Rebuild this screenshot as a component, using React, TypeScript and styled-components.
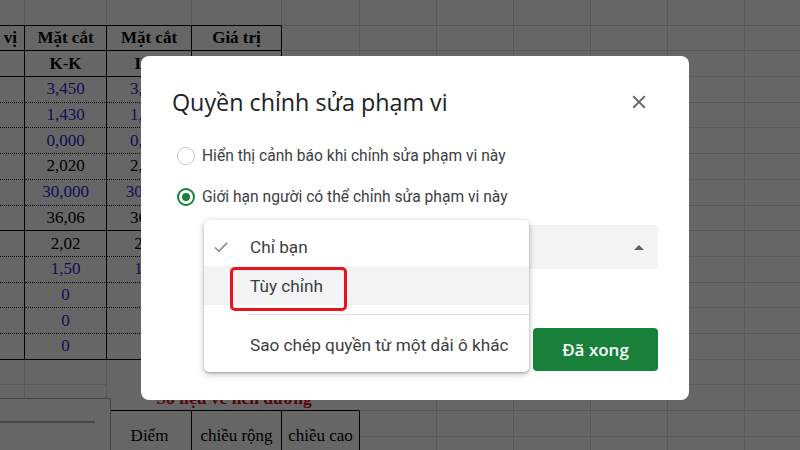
import React from 'react';
import styled, { createGlobalStyle, css } from 'styled-components';

const Global = createGlobalStyle`
  html, body { margin: 0; padding: 0; width: 800px; height: 450px; overflow: hidden; background: #fff; }
  #root { width: 800px; height: 450px; }
  * { box-sizing: border-box; }
`;

const Page = styled.div`
  position: relative;
  width: 800px;
  height: 450px;
  overflow: hidden;
  background: #fff;
`;

/* ---------- spreadsheet background ---------- */

const Sheet = styled.div`
  display: grid;
  grid-template-columns: 75px 82px 85px 90px 78px repeat(8, 77px);
  grid-auto-rows: 25.7px;
  margin-left: -50px;
  font-family: "Liberation Serif", "Times New Roman", serif;
  font-size: 17px;
  color: #000;
`;

type Edge = 'grid' | 'solid' | 'dotted' | 'none';

const edge = (e: Edge) =>
  e === 'solid' ? '1px solid #000' : e === 'dotted' ? '1px dotted #000' : e === 'none' ? '1px solid transparent' : '1px solid #dcdcdc';

const Cell = styled.div<{ $right: Edge; $bottom: Edge; $left?: Edge; $bold?: boolean; $tone?: 'blue' | 'black' | 'red'; $align?: 'center' | 'right' }>`
  display: flex;
  align-items: center;
  justify-content: ${(p) => (p.$align === 'right' ? 'flex-end' : 'center')};
  padding: 0 ${(p) => (p.$align === 'right' ? '7px' : '0')} 0 0;
  overflow: hidden;
  white-space: nowrap;
  border-right: ${(p) => edge(p.$right)};
  border-bottom: ${(p) => edge(p.$bottom)};
  ${(p) => p.$left && css`border-left: ${edge(p.$left)};`}
  font-weight: ${(p) => (p.$bold ? 700 : 400)};
  color: ${(p) => (p.$tone === 'blue' ? '#2b2bd8' : p.$tone === 'red' ? '#d01010' : '#000')};
`;

const SpanTitle = styled(Cell)`
  font-size: 17.5px;
  align-items: flex-end;
  padding-bottom: 1px;
  padding-left: 2px;
`;

const FloatBox = styled.div`
  position: absolute;
  left: 0;
  top: 398px;
  width: 111px;
  height: 60px;
  background: #fff;
  border: 1px solid #aaa;
  border-left: none;
`;

const FloatRule = styled.div`
  margin-top: 22px;
  width: 95px;
  height: 2px;
  background: #b0b0b0;
`;

const Backdrop = styled.div`
  position: absolute;
  inset: 0;
  background: rgba(0, 0, 0, 0.6);
`;

/* ---------- dialog ---------- */

const Dialog = styled.div`
  position: absolute;
  left: 141px;
  top: 56px;
  width: 548px;
  height: 344px;
  background: #fff;
  border-radius: 8px;
  padding: 24px 31px 29px 31px;
  display: flex;
  flex-direction: column;
  font-family: Roboto, "Noto Sans", sans-serif;
  color: #3c4043;
`;

const Header = styled.div`
  height: 44px;
  display: flex;
  align-items: center;
  justify-content: space-between;
`;

const Title = styled.h1`
  margin: 0;
  font-family: "Open Sans", Roboto, sans-serif;
  font-weight: 400;
  font-size: 23.3px;
  color: #202124;
`;

const CloseButton = styled.div`
  width: 36px;
  height: 36px;
  display: flex;
  align-items: center;
  justify-content: center;
  margin-right: 1px;
`;

const RadioList = styled.div`
  margin-top: 11px;
  display: flex;
  flex-direction: column;
`;

const RadioRow = styled.div`
  height: 41px;
  display: flex;
  align-items: center;
  gap: 7px;
  padding-left: 5px;
  font-size: 15.6px;
  color: #3c4043;
`;

const RadioCircle = styled.span<{ $checked?: boolean }>`
  width: 18px;
  height: 18px;
  border-radius: 50%;
  display: flex;
  align-items: center;
  justify-content: center;
  border: ${(p) => (p.$checked ? '2px solid #188038' : '1.5px solid #c4c7c5')};
  &::after {
    content: '';
    width: 8px;
    height: 8px;
    border-radius: 50%;
    background: ${(p) => (p.$checked ? '#188038' : 'transparent')};
  }
`;

const SelectWrap = styled.div`
  position: relative;
  margin-top: 8px;
  margin-left: 32px;
  height: 44px;
`;

const SelectBox = styled.div`
  height: 44px;
  background: #f1f3f4;
  border-radius: 4px;
  display: flex;
  align-items: center;
  justify-content: flex-end;
  padding-right: 14px;
`;

const UpArrow = styled.span`
  width: 0;
  height: 0;
  border-left: 5px solid transparent;
  border-right: 5px solid transparent;
  border-bottom: 5px solid #5f6368;
`;

const Menu = styled.div`
  position: absolute;
  left: 0;
  top: -5px;
  width: 325px;
  height: 152px;
  background: #fff;
  border-radius: 5px;
  box-shadow: 0 2px 6px rgba(0, 0, 0, 0.28), 0 1px 2px rgba(0, 0, 0, 0.2);
  padding: 7px 0 8px;
  display: flex;
  flex-direction: column;
`;

const MenuItem = styled.div<{ $hover?: boolean }>`
  height: 39px;
  display: flex;
  align-items: center;
  padding-left: 8px;
  font-size: 17.2px;
  color: #3c4043;
  background: ${(p) => (p.$hover ? '#f1f3f4' : 'transparent')};
`;

const CheckSlot = styled.span`
  width: 38px;
  display: flex;
  align-items: center;
`;

const MenuDivider = styled.div`
  margin: 9px 0 10px 44px;
  height: 1px;
  background: #dadce0;
`;

const Highlight = styled.div`
  position: absolute;
  left: 26px;
  top: 47px;
  width: 117px;
  height: 44px;
  border: 3px solid #e8141a;
  border-radius: 5px;
`;

const Footer = styled.div`
  margin-top: 59px;
  display: flex;
  justify-content: flex-end;
`;

const DoneButton = styled.div`
  width: 125px;
  height: 43px;
  border-radius: 4px;
  background: #188038;
  color: #fff;
  display: flex;
  align-items: center;
  justify-content: center;
  font-family: "Open Sans", Roboto, sans-serif;
  font-weight: 600;
  font-size: 17px;
`;

/* ---------- data ---------- */

type CellDef = {
  text?: string;
  right: Edge;
  bottom: Edge;
  left?: Edge;
  bold?: boolean;
  tone?: 'blue' | 'black' | 'red';
  align?: 'center' | 'right';
  colSpan?: number;
  rowSpan?: number;
  title?: boolean;
  skip?: boolean;
};

const values = ['3,450', '1,430', '0,000', '2,020', '30,000', '36,06', '2,02', '1,50', '0', '0', '0'];
const tones: ('blue' | 'black')[] = ['blue', 'blue', 'blue', 'black', 'blue', 'black', 'black', 'blue', 'blue', 'blue', 'blue'];
const NCOLS = 13;
const NROWS = 18;

function buildSheet(): CellDef[][] {
  const rows: CellDef[][] = [];
  for (let r = 0; r < NROWS; r++) {
    const row: CellDef[] = [];
    for (let c = 0; c < NCOLS; c++) {
      const cell: CellDef = { right: 'grid', bottom: 'grid' };
      if (c <= 3) {
        if (r === 0) cell.bottom = 'solid';
        if (r >= 1 && r <= 13) {
          cell.right = 'solid';
          cell.bottom = r === 1 || r === 2 || r === 8 || r === 13 ? 'solid' : 'dotted';
        }
      }
      if (r === 1) {
        cell.bold = true;
        cell.text = ['Đơn vị', 'Mặt cắt', 'Mặt cắt', 'Giá trị'][c];
        if (c === 0) cell.align = 'right';
      }
      if (r === 2) {
        cell.bold = true;
        cell.text = ['', 'K-K', 'L-L', ''][c];
      }
      if (r >= 3 && r <= 13 && (c === 1 || c === 2 || c === 3)) {
        cell.text = values[r - 3];
        cell.tone = tones[r - 3];
      }
      row.push(cell);
    }
    rows.push(row);
  }
  rows[15][2] = { text: 'Số liệu về nền đường', right: 'none', bottom: 'solid', colSpan: 3, bold: true, tone: 'red', title: true };
  rows[15][3].skip = true;
  rows[15][4].skip = true;
  rows[14][2].bottom = 'none';
  rows[14][3].bottom = 'none';
  rows[14][4].bottom = 'none';
  const heads = ['Điểm', 'chiều rộng', 'chiều cao'];
  [2, 3, 4].forEach((c, i) => {
    rows[16][c] = { text: heads[i], right: 'solid', bottom: 'solid', rowSpan: 2, left: c === 2 ? 'solid' : undefined };
    rows[17][c].skip = true;
  });
  return rows;
}

const sheet = buildSheet();

const CheckIcon = () => (
  <svg width="18" height="18" viewBox="0 0 24 24" aria-hidden="true">
    <path fill="#80868b" d="M9 16.17L4.83 12l-1.42 1.41L9 19 21 7l-1.41-1.41z" />
  </svg>
);

const CloseIcon = () => (
  <svg width="22" height="22" viewBox="0 0 24 24" aria-hidden="true">
    <path fill="#5f6368" d="M19 6.41L17.59 5 12 10.59 6.41 5 5 6.41 10.59 12 5 17.59 6.41 19 12 13.41 17.59 19 19 17.59 13.41 12z" />
  </svg>
);

export default function App() {
  return (
    <Page>
      <Global />
      <Sheet>
        {sheet.map((row, r) =>
          row.map((cell, c) => {
            if (cell.skip) return null;
            const style: React.CSSProperties = {};
            if (cell.colSpan) style.gridColumn = `span ${cell.colSpan}`;
            if (cell.rowSpan) style.gridRow = `span ${cell.rowSpan}`;
            const Comp = cell.title ? SpanTitle : Cell;
            return (
              <Comp
                key={`${r}-${c}`}
                style={style}
                $right={cell.right}
                $bottom={cell.bottom}
                $left={cell.left}
                $bold={cell.bold}
                $tone={cell.tone}
                $align={cell.align}
              >
                {cell.text}
              </Comp>
            );
          })
        )}
      </Sheet>
      <FloatBox>
        <FloatRule />
      </FloatBox>
      <Backdrop />
      <Dialog>
        <Header>
          <Title>Quyền chỉnh sửa phạm vi</Title>
          <CloseButton>
            <CloseIcon />
          </CloseButton>
        </Header>
        <RadioList>
          <RadioRow>
            <RadioCircle />
            Hiển thị cảnh báo khi chỉnh sửa phạm vi này
          </RadioRow>
          <RadioRow>
            <RadioCircle $checked />
            Giới hạn người có thể chỉnh sửa phạm vi này
          </RadioRow>
        </RadioList>
        <SelectWrap>
          <SelectBox>
            <UpArrow />
          </SelectBox>
          <Menu>
            <MenuItem>
              <CheckSlot>
                <CheckIcon />
              </CheckSlot>
              Chỉ bạn
            </MenuItem>
            <MenuItem $hover>
              <CheckSlot />
              Tùy chỉnh
            </MenuItem>
            <MenuDivider />
            <MenuItem>
              <CheckSlot />
              Sao chép quyền từ một dải ô khác
            </MenuItem>
            <Highlight />
          </Menu>
        </SelectWrap>
        <Footer>
          <DoneButton>Đã xong</DoneButton>
        </Footer>
      </Dialog>
    </Page>
  );
}
